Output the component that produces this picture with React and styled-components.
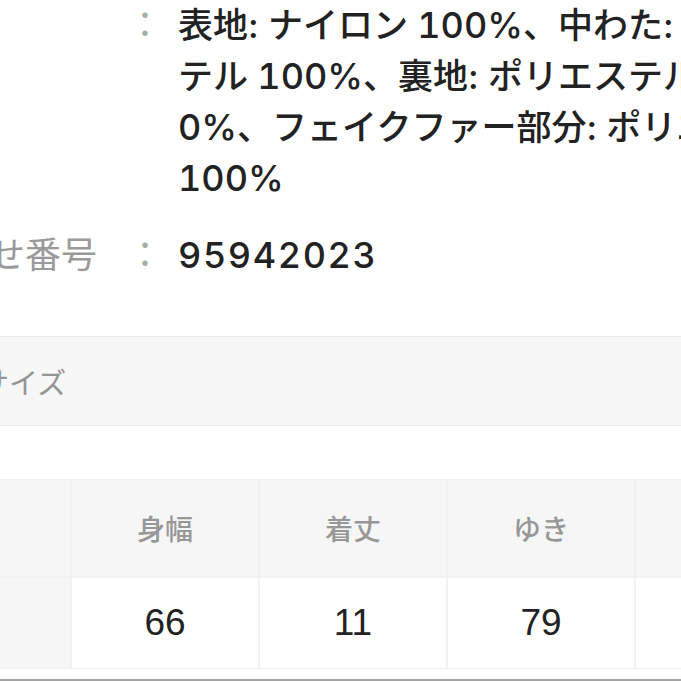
import React from "react";
import styled, { createGlobalStyle } from "styled-components";

const Global = createGlobalStyle`
  html, body {
    margin: 0;
    padding: 0;
    background: #ffffff;
    overflow: hidden;
  }
  body {
    font-family: "Liberation Sans", "Noto Sans CJK JP", sans-serif;
    color: #222222;
  }
`;

const Page = styled.div`
  margin-left: -200px;
  width: 1200px;
  display: flex;
  flex-direction: column;
`;

const SpecList = styled.dl`
  margin: 0;
  padding-left: 9px;
  display: flex;
  flex-direction: column;
  gap: 26px;
`;

const SpecRow = styled.div`
  display: grid;
  grid-template-columns: 303px 36px 1fr;
  column-gap: 15px;
  font-size: 36px;
  line-height: 51px;
`;

const Label = styled.dt`
  margin: 0;
  color: #9a9a9a;
  white-space: nowrap;
`;

const Colon = styled.span`
  color: #ababab;
  text-align: center;
`;

const Value = styled.dd`
  margin: 0;
  color: #222222;
  font-family: "Inter", "Noto Sans CJK JP", sans-serif;
  font-size: 35px;
  font-weight: 500;
  display: flex;
  flex-direction: column;
`;

const Line = styled.span`
  display: block;
  height: 51px;
  line-height: 51px;
  white-space: nowrap;
`;

const Num = styled.span`
  font-size: 36px;
  line-height: 1;
  font-variant-numeric: tabular-nums;
  letter-spacing: ${(p) => (p.$wide ? "1.6px" : "0")};
`;

const Band = styled.div`
  margin-top: 55px;
  height: 90px;
  box-sizing: border-box;
  border-top: 1px solid #ebebeb;
  border-bottom: 1px solid #ebebeb;
  background: #f7f7f7;
  display: flex;
  align-items: center;
  padding-left: 180px;
  font-size: 29px;
  color: #959595;
`;

const SizeTable = styled.div`
  margin-top: 54px;
  display: grid;
  grid-template-columns: 270px repeat(4, 186px);
  grid-template-rows: 96px 90px;
  gap: 2px;
`;

const Cell = styled.div`
  display: flex;
  align-items: center;
  justify-content: center;
  box-shadow: 0 0 0 1px #f2f2f2;
  background: ${(p) => (p.$head || p.$side ? "#f6f6f6" : "#ffffff")};
  color: ${(p) => (p.$head || p.$side ? "#979797" : "#222222")};
  font-size: ${(p) => (p.$head || p.$side ? "28px" : "37px")};
  font-weight: ${(p) => (p.$head ? 500 : 400)};
`;

const Rule = styled.div`
  margin-top: 11px;
  height: 2px;
  background: #a3a3a3;
`;

const heads = ["身幅", "着丈", "ゆき", "袖丈"];
const values = ["66", "11", "79", "60"];

export default function App() {
  return (
    <>
      <Global />
      <Page>
        <SpecList>
          <SpecRow>
            <Label>素材</Label>
            <Colon>：</Colon>
            <Value>
              <Line>
                表地: ナイロン <Num>100%</Num>、中わた: ポリエス
              </Line>
              <Line>
                テル <Num>100%</Num>、裏地: ポリエステル <Num>10</Num>
              </Line>
              <Line>
                <Num>0%</Num>、フェイクファー部分: ポリエステル
              </Line>
              <Line>
                <Num>100%</Num>
              </Line>
            </Value>
          </SpecRow>
          <SpecRow>
            <Label>お問い合わせ番号</Label>
            <Colon>：</Colon>
            <Value>
              <Line>
                <Num $wide>95942023</Num>
              </Line>
            </Value>
          </SpecRow>
        </SpecList>

        <Band>サイズ</Band>

        <SizeTable>
          <Cell $side>サイズ</Cell>
          {heads.map((h) => (
            <Cell key={h} $head>
              {h}
            </Cell>
          ))}
          <Cell $side>F</Cell>
          {values.map((v, i) => (
            <Cell key={i}>{v}</Cell>
          ))}
        </SizeTable>
        <Rule />
      </Page>
    </>
  );
}
